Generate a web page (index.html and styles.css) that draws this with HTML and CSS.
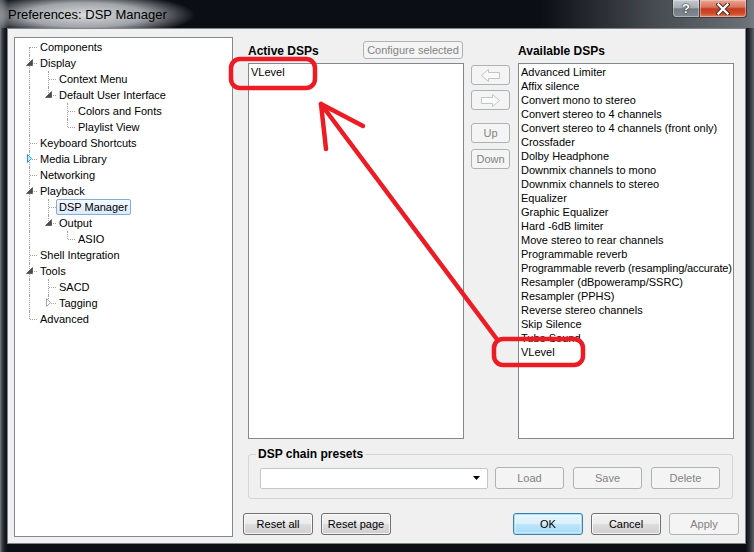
FILE: index.html
```html
<!DOCTYPE html>
<html>
<head>
<meta charset="utf-8">
<title>Preferences: DSP Manager</title>
<link rel="stylesheet" href="styles.css">
</head>
<body>
<div class="window">
  <div class="titlebar">
    <div class="title">Preferences: DSP Manager</div>
    <div class="caption-btns">
      <div class="cap help">?</div>
      <div class="cap close">
        <svg width="14" height="12" viewBox="0 0 14 12"><path d="M2.5 1.5 L11.5 10.5 M11.5 1.5 L2.5 10.5" stroke="#3a2a28" stroke-width="4.2" stroke-linecap="square"/><path d="M2.5 1.5 L11.5 10.5 M11.5 1.5 L2.5 10.5" stroke="#ffffff" stroke-width="2.4" stroke-linecap="square"/></svg>
      </div>
    </div>
  </div>
  <div class="client">
    <div class="tree">
      <div class="row"><span class="c first"></span><span class="lbl">Components</span></div>
      <div class="row"><span class="c tee"><svg class="exp" viewBox="0 0 19 16"><polygon points="12.5,4.5 12.5,10.5 6.5,10.5" fill="#4a4a4a" stroke="#3a3a3a" stroke-width="0.6"/></svg></span><span class="lbl">Display</span></div>
      <div class="row"><span class="c v"></span><span class="c tee"></span><span class="lbl">Context Menu</span></div>
      <div class="row"><span class="c v"></span><span class="c ell"><svg class="exp" viewBox="0 0 19 16"><polygon points="12.5,4.5 12.5,10.5 6.5,10.5" fill="#4a4a4a" stroke="#3a3a3a" stroke-width="0.6"/></svg></span><span class="lbl">Default User Interface</span></div>
      <div class="row"><span class="c v"></span><span class="c"></span><span class="c tee"></span><span class="lbl">Colors and Fonts</span></div>
      <div class="row"><span class="c v"></span><span class="c"></span><span class="c ell"></span><span class="lbl">Playlist View</span></div>
      <div class="row"><span class="c tee"></span><span class="lbl">Keyboard Shortcuts</span></div>
      <div class="row"><span class="c tee"><svg class="exp" viewBox="0 0 19 16"><polygon points="7.5,3.5 11.5,7.5 7.5,11.5" fill="#c6ecfb" stroke="#1ba1e2" stroke-width="1"/></svg></span><span class="lbl">Media Library</span></div>
      <div class="row"><span class="c tee"></span><span class="lbl">Networking</span></div>
      <div class="row"><span class="c tee"><svg class="exp" viewBox="0 0 19 16"><polygon points="12.5,4.5 12.5,10.5 6.5,10.5" fill="#4a4a4a" stroke="#3a3a3a" stroke-width="0.6"/></svg></span><span class="lbl">Playback</span></div>
      <div class="row"><span class="c v"></span><span class="c tee"></span><span class="lbl sel">DSP Manager</span></div>
      <div class="row"><span class="c v"></span><span class="c ell"><svg class="exp" viewBox="0 0 19 16"><polygon points="12.5,4.5 12.5,10.5 6.5,10.5" fill="#4a4a4a" stroke="#3a3a3a" stroke-width="0.6"/></svg></span><span class="lbl">Output</span></div>
      <div class="row"><span class="c v"></span><span class="c"></span><span class="c ell"></span><span class="lbl">ASIO</span></div>
      <div class="row"><span class="c tee"></span><span class="lbl">Shell Integration</span></div>
      <div class="row"><span class="c tee"><svg class="exp" viewBox="0 0 19 16"><polygon points="12.5,4.5 12.5,10.5 6.5,10.5" fill="#4a4a4a" stroke="#3a3a3a" stroke-width="0.6"/></svg></span><span class="lbl">Tools</span></div>
      <div class="row"><span class="c v"></span><span class="c tee"></span><span class="lbl">SACD</span></div>
      <div class="row"><span class="c v"></span><span class="c ell"><svg class="exp" viewBox="0 0 19 16"><polygon points="7.5,3.5 11.5,7.5 7.5,11.5" fill="#ffffff" stroke="#a6a6a6" stroke-width="1"/></svg></span><span class="lbl">Tagging</span></div>
      <div class="row"><span class="c ell"></span><span class="lbl">Advanced</span></div>
    </div>

    <div class="main">
      <div class="lists">
        <div class="col">
          <div class="col-head">
            <span class="heading">Active DSPs</span>
            <button class="btn dis cfg">Configure selected</button>
          </div>
          <div class="listbox">
            <div class="item">VLevel</div>
          </div>
        </div>
        <div class="arrows">
          <button class="btn dis arrow first-arrow"><svg width="21" height="15" viewBox="0 0 21 15"><polygon points="1.5,7.5 8.5,1.5 8.5,4.5 19.5,4.5 19.5,10.5 8.5,10.5 8.5,13.5" fill="#fafafa" stroke="#c4c4c4" stroke-width="1"/></svg></button>
          <button class="btn dis arrow second-arrow"><svg width="21" height="15" viewBox="0 0 21 15"><polygon points="19.5,7.5 12.5,1.5 12.5,4.5 1.5,4.5 1.5,10.5 12.5,10.5 12.5,13.5" fill="#fafafa" stroke="#c4c4c4" stroke-width="1"/></svg></button>
          <button class="btn dis arrow up">Up</button>
          <button class="btn dis arrow down">Down</button>
        </div>
        <div class="col">
          <div class="col-head">
            <span class="heading">Available DSPs</span>
          </div>
          <div class="listbox">
            <div class="item">Advanced Limiter</div>
            <div class="item">Affix silence</div>
            <div class="item">Convert mono to stereo</div>
            <div class="item">Convert stereo to 4 channels</div>
            <div class="item">Convert stereo to 4 channels (front only)</div>
            <div class="item">Crossfader</div>
            <div class="item">Dolby Headphone</div>
            <div class="item">Downmix channels to mono</div>
            <div class="item">Downmix channels to stereo</div>
            <div class="item">Equalizer</div>
            <div class="item">Graphic Equalizer</div>
            <div class="item">Hard -6dB limiter</div>
            <div class="item">Move stereo to rear channels</div>
            <div class="item">Programmable reverb</div>
            <div class="item tight">Programmable reverb (resampling/accurate)</div>
            <div class="item">Resampler (dBpoweramp/SSRC)</div>
            <div class="item">Resampler (PPHS)</div>
            <div class="item">Reverse stereo channels</div>
            <div class="item">Skip Silence</div>
            <div class="item">Tube Sound</div>
            <div class="item">VLevel</div>
          </div>
        </div>
      </div>

      <fieldset class="presets">
        <legend>DSP chain presets</legend>
        <div class="preset-row">
          <div class="combo"><svg class="drop" width="7" height="4" viewBox="0 0 7 4"><polygon points="0,0 7,0 3.5,4" fill="#000"/></svg></div>
          <button class="btn dis pbtn">Load</button>
          <button class="btn dis pbtn">Save</button>
          <button class="btn dis pbtn">Delete</button>
        </div>
      </fieldset>

      <div class="bottom">
        <div class="grp">
          <button class="btn">Reset all</button>
          <button class="btn">Reset page</button>
        </div>
        <div class="grp">
          <button class="btn default">OK</button>
          <button class="btn">Cancel</button>
          <button class="btn dis">Apply</button>
        </div>
      </div>
    </div>
  </div>

  <svg class="annot" width="754" height="552" viewBox="0 0 754 552">
    <g fill="none" stroke="#ed1c24" stroke-width="4.5" stroke-linecap="round" stroke-linejoin="round">
      <rect x="231" y="59" width="84" height="29" rx="9"/>
      <rect x="494" y="339" width="89" height="26" rx="9"/>
      <path d="M321 104 L496 338"/>
      <path d="M326 149 L321 104 L363 126"/>
    </g>
  </svg>
</div>
</body>
</html>
```

FILE: styles.css
```css
html, body {
  margin: 0;
  padding: 0;
  background: #0b0e14;
}

.window {
  position: relative;
  width: 754px;
  height: 552px;
  overflow: hidden;
  font-family: "Liberation Sans", Arial, sans-serif;
  font-size: 11px;
  color: #000;
  background:
    linear-gradient(90deg, #7b8289 0px, #3c4147 2px, #171b21 5px, rgba(11,14,20,0) 8px, rgba(11,14,20,0) 746px, #23272d 749px, #5d636a 754px),
    #0b0e14;
}

/* ---------- title bar ---------- */
.titlebar {
  height: 28px;
  display: flex;
  align-items: flex-start;
  background:
    radial-gradient(ellipse 110px 22px at 85px 15px, rgba(228,230,233,0.95) 0%, rgba(210,213,217,0.75) 55%, rgba(120,124,130,0) 100%),
    linear-gradient(90deg, rgba(60,64,70,0) 540px, rgba(78,83,89,0.85) 650px, rgba(120,126,133,0.9) 754px),
    linear-gradient(90deg, #5a6067 0px, rgba(11,14,20,0) 8px);
}

.title {
  margin: 7px 0 0 8px;
  font-size: 13px;
  line-height: 16px;
  color: #000;
  white-space: pre;
}

.caption-btns {
  margin-left: auto;
  margin-right: 7px;
  display: flex;
}

.cap {
  height: 18px;
  box-sizing: border-box;
  border: 1px solid #3b4046;
  border-top: none;
  display: flex;
  align-items: center;
  justify-content: center;
}

.help {
  width: 27px;
  border-right: none;
  border-bottom-left-radius: 4px;
  background: linear-gradient(#c3c8cd 0%, #a6adb4 45%, #747b82 52%, #838b93 100%);
  box-shadow: inset 0 0 0 1px rgba(255,255,255,0.35);
  color: #fff;
  font-weight: bold;
  font-size: 13px;
  text-shadow: 0 0 2px #1f2326, 0 0 1px #1f2326;
}

.close {
  width: 48px;
  border-bottom-right-radius: 4px;
  background: linear-gradient(#e9a796 0%, #d9735b 42%, #c63a1e 52%, #cf4d2c 80%, #e6845d 100%);
  box-shadow: inset 0 0 0 1px rgba(255,220,210,0.45);
}

/* ---------- client ---------- */
.client {
  margin-left: 7px;
  width: 737px;
  height: 514px;
  border: 1px solid #7e848a;
  background: #f0f0f0;
  display: flex;
  align-items: flex-start;
}

.tree {
  margin: 8px 0 0 6px;
  width: 219px;
  height: 500px;
  box-sizing: border-box;
  border: 1px solid #828790;
  background: #fff;
  padding: 1px 0 0 5px;
  flex: none;
}

.row {
  display: flex;
  align-items: center;
  height: 16px;
}

.c {
  position: relative;
  width: 19px;
  height: 16px;
  flex: none;
}

.c.v::before,
.c.tee::before,
.c.ell::before,
.c.first::before {
  content: "";
  position: absolute;
  left: 9px;
  top: 0;
  bottom: 0;
  border-left: 1px dotted #a0a0a0;
}

.c.ell::before { bottom: 8px; }
.c.first::before { top: 8px; }

.c.tee::after,
.c.ell::after,
.c.first::after {
  content: "";
  position: absolute;
  left: 10px;
  top: 8px;
  width: 7px;
  border-top: 1px dotted #a0a0a0;
}

.exp {
  position: absolute;
  left: 0;
  top: 0;
  width: 19px;
  height: 16px;
  z-index: 1;
}

.lbl {
  margin-left: -2px;
  height: 16px;
  box-sizing: border-box;
  line-height: 14px;
  padding: 0 2px;
  border: 1px solid transparent;
  border-radius: 2px;
  white-space: nowrap;
}

.lbl.sel {
  border-color: #84acdd;
  background: linear-gradient(#f4f9fe, #dcebfc);
}

/* ---------- main panel ---------- */
.main {
  flex: 1;
  padding: 12px 6px 8px 10px;
  display: flex;
  flex-direction: column;
}

.lists {
  display: flex;
  margin: 0 5px;
}

.col {
  width: 216px;
  display: flex;
  flex-direction: column;
}

.col-head {
  height: 22px;
  display: flex;
  align-items: flex-start;
  justify-content: space-between;
}

.heading {
  font-weight: bold;
  font-size: 12px;
  line-height: 20px;
}

.listbox {
  height: 376px;
  box-sizing: border-box;
  border: 1px solid #828790;
  background: #fff;
  padding: 1px 0 0 2px;
  overflow: hidden;
}

.item {
  height: 14px;
  line-height: 14px;
  white-space: nowrap;
}

.item.tight {
  letter-spacing: -0.12px;
}

.arrows {
  width: 39px;
  margin: 0 8px 0 7px;
  padding-top: 24px;
  display: flex;
  flex-direction: column;
}

.btn {
  font-family: inherit;
  font-size: 11px;
  color: #000;
  margin: 0;
  padding: 0;
  box-sizing: border-box;
  border: 1px solid #707070;
  border-radius: 3px;
  background: linear-gradient(#f2f2f2 0%, #ebebeb 50%, #dddddd 50%, #cfcfcf 100%);
  box-shadow: inset 0 0 0 1px rgba(255,255,255,0.75);
  display: flex;
  align-items: center;
  justify-content: center;
  white-space: nowrap;
}

.btn.dis {
  border-color: #adb2b5;
  background: #f4f4f4;
  box-shadow: none;
  color: #838383;
}

.btn.default {
  border-color: #3c7fb1;
  background: linear-gradient(#eaf6fd 0%, #d9f0fc 50%, #bee6fd 50%, #a7d9f5 100%);
  box-shadow: inset 0 0 0 1px #9fe3fb, inset 0 0 0 2px rgba(255,255,255,0.4);
}

.cfg {
  width: 100px;
  height: 18px;
  margin-right: 1px;
}

.arrow {
  width: 39px;
  height: 20px;
}

.second-arrow { margin-top: 5px; }
.up { margin-top: 13px; }
.down { margin-top: 6px; }

/* ---------- presets group ---------- */
.presets {
  margin: 8px 6px 0 5px;
  padding: 0 12px 9px 11px;
  border: 1px solid #d5d5d5;
  border-radius: 3px;
  min-inline-size: 0;
}

.presets legend {
  padding: 0 2px;
  margin-left: -4px;
  font-weight: bold;
  font-size: 12px;
  line-height: 14px;
}

.preset-row {
  margin-top: 6px;
  height: 22px;
  display: flex;
  align-items: center;
}

.combo {
  width: 228px;
  height: 21px;
  box-sizing: border-box;
  border: 1px solid #c3c6cb;
  border-radius: 2px;
  background: #fff;
  display: flex;
  align-items: center;
  justify-content: flex-end;
  padding-right: 7px;
  margin-right: 7px;
}

.pbtn {
  width: 69px;
  height: 22px;
  margin-right: 9px;
}

.pbtn:last-child { margin-right: 0; }

/* ---------- bottom buttons ---------- */
.bottom {
  margin-top: 14px;
  display: flex;
  justify-content: space-between;
}

.grp {
  display: flex;
  gap: 8px;
}

.grp .btn {
  width: 70px;
  height: 22px;
}

/* ---------- annotation overlay ---------- */
.annot {
  position: absolute;
  left: 0;
  top: 0;
  pointer-events: none;
}
```
